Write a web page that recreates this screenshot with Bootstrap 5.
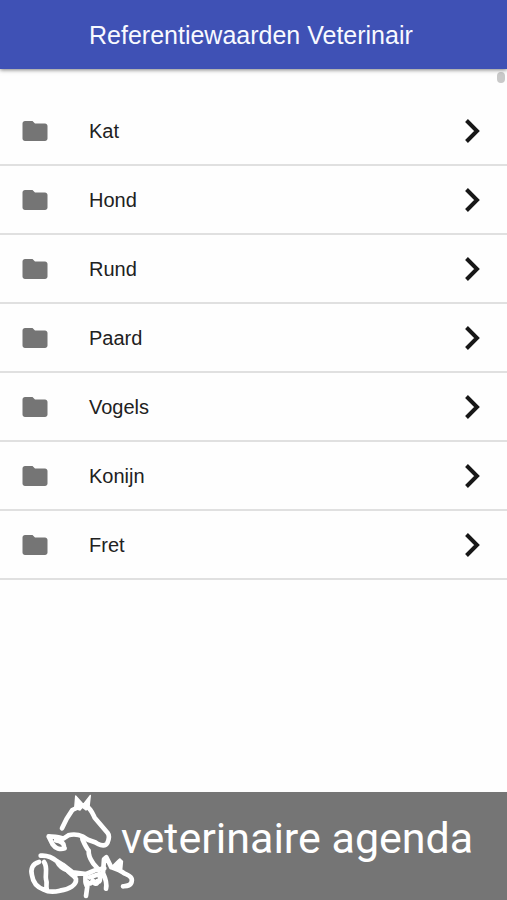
<!DOCTYPE html>
<html lang="nl">
<head>
<meta charset="utf-8">
<meta name="viewport" content="width=device-width, initial-scale=1">
<title>Referentiewaarden Veterinair</title>
<link href="https://cdn.jsdelivr.net/npm/bootstrap@5.3.0/dist/css/bootstrap.min.css" rel="stylesheet">
<style>
body { font-family: "Liberation Sans", Arial, sans-serif; color: #212121; background: #fefefe; }
.app-bar { background: #3f51b5; min-height: 69px; padding-left: 89px; box-shadow: 0 1px 4px rgba(0,0,0,.5); z-index: 1; }
.app-title { font-size: 25px; line-height: 32px; color: #f8f9ff; }
.scroll-thumb { top: 72px; right: 2px; width: 8px; height: 11px; background: #c9c9c9; }
.species-list { padding-top: 28px; }
.species { height: 69px; padding: 0 20px; font-size: 20px; line-height: 28px; color: #212121; border-bottom: 2px solid #e0e0e0; }
.species:hover { background: #f5f5f5; }
.folder { width: 30px; height: 30px; margin-right: 39px; fill: #757575; }
.chevron { width: 30px; height: 30px; }
.sponsor { background: #757575; height: 108px; padding-left: 20px; font-family: Roboto, sans-serif; font-size: 43px; line-height: 50px; }
.sponsor:hover { color: #fff; }
.logo { width: 120px; height: 108px; }
.sponsor-name { margin-left: -19px; margin-bottom: 16px; }
</style>
<script src="https://cdn.jsdelivr.net/npm/bootstrap@5.3.0/dist/js/bootstrap.bundle.min.js" defer></script>
</head>
<body class="d-flex flex-column min-vh-100 position-relative">
<svg class="d-none" aria-hidden="true">
  <symbol id="folder" viewBox="0 0 24 24"><path d="M10 4H4c-1.1 0-2 .9-2 2v12c0 1.1.9 2 2 2h16c1.1 0 2-.9 2-2V8c0-1.1-.9-2-2-2h-8l-2-2z"/></symbol>
  <symbol id="chevron" viewBox="0 0 30 30"><path d="M9.500 4.500L20 15L9.500 25.500" fill="none" stroke="#171717" stroke-width="4"/></symbol>
</svg>
<header class="app-bar d-flex align-items-center position-relative">
  <h1 class="app-title fw-normal text-nowrap m-0">Referentiewaarden Veterinair</h1>
</header>
<div class="scroll-thumb position-absolute rounded-pill"></div>
<main class="flex-grow-1">
  <nav class="species-list d-flex flex-column" aria-label="Diersoorten">
    <a class="species d-flex align-items-center text-decoration-none" href="#kat"><svg class="folder"><use href="#folder"/></svg><span class="flex-grow-1">Kat</span><svg class="chevron"><use href="#chevron"/></svg></a>
    <a class="species d-flex align-items-center text-decoration-none" href="#hond"><svg class="folder"><use href="#folder"/></svg><span class="flex-grow-1">Hond</span><svg class="chevron"><use href="#chevron"/></svg></a>
    <a class="species d-flex align-items-center text-decoration-none" href="#rund"><svg class="folder"><use href="#folder"/></svg><span class="flex-grow-1">Rund</span><svg class="chevron"><use href="#chevron"/></svg></a>
    <a class="species d-flex align-items-center text-decoration-none" href="#paard"><svg class="folder"><use href="#folder"/></svg><span class="flex-grow-1">Paard</span><svg class="chevron"><use href="#chevron"/></svg></a>
    <a class="species d-flex align-items-center text-decoration-none" href="#vogels"><svg class="folder"><use href="#folder"/></svg><span class="flex-grow-1">Vogels</span><svg class="chevron"><use href="#chevron"/></svg></a>
    <a class="species d-flex align-items-center text-decoration-none" href="#konijn"><svg class="folder"><use href="#folder"/></svg><span class="flex-grow-1">Konijn</span><svg class="chevron"><use href="#chevron"/></svg></a>
    <a class="species d-flex align-items-center text-decoration-none" href="#fret"><svg class="folder"><use href="#folder"/></svg><span class="flex-grow-1">Fret</span><svg class="chevron"><use href="#chevron"/></svg></a>
  </nav>
</main>
<footer>
  <a class="sponsor d-flex align-items-center text-white text-decoration-none text-nowrap" href="#agenda">
    <svg class="logo flex-shrink-0" viewBox="0 21 360 324" fill="none" stroke="#fff" stroke-width="14" stroke-linecap="round" stroke-linejoin="round" role="img" aria-label="Paard, hond, kat en konijn">
      <path d="M126 130L140 101L157 75L176 66M203 67C213 73 217 84 224 98L263 144C270 153 266 165 262 174C257 184 244 182 234 177C222 168 207 168 199 161C188 151 165 145 145 151L130 161C115 154 99 155 86 154L98 178C106 190 120 195 134 190M108 166C120 168 132 172 132 184"/>
      <path d="M167 33L164 70L180 75L187 67L198 75L207 67L211 31L190 58Z" fill="#fff" stroke-width="4"/>
      <path d="M187 162C194 178 198 188 206 197C205 217 213 225 221 237L237 255M62 212C82 210 98 218 111 229L128 239L158 262L199 267L224 256L253 250M112 231C118 244 128 251 144 257L167 270"/>
      <path d="M57 231C37 236 31 253 36 271C39 293 54 308 72 314C88 323 106 320 120 317C148 313 170 300 168 282C164 270 146 266 140 253M72 231C84 247 75 267 78 283C83 297 76 304 81 315"/>
      <path d="M196 268C198 280 192 295 202 304L198 333M202 291C210 300 216 292 219 287C224 300 232 298 232 288C239 295 241 284 240 275M209 277L244 265M258 311C262 294 256 279 249 264L252 223L259 217L269 237L274 247C290 252 297 253 310 263C323 271 339 274 335 290C333 303 321 303 309 304"/>
      <path d="M274 247L291 230L299 222L307 229L305 251Z" fill="#fff" stroke-width="5"/>
    </svg>
    <span class="sponsor-name">veterinaire agenda</span>
  </a>
</footer>
</body>
</html>
